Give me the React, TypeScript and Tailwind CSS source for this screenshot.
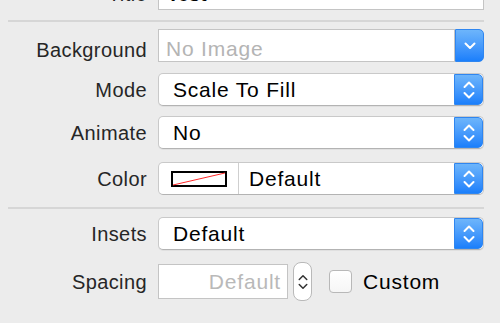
import React from "react";

const font = { fontFamily: '"Liberation Sans", Arial, sans-serif' };

function UpDown({ color = "white", w = 12, h = 20, sw = 2 }: { color?: string; w?: number; h?: number; sw?: number }) {
  return (
    <svg width={w} height={h} viewBox="0 0 12 20" fill="none">
      <path d="M1.5 7 L6 2.5 L10.5 7" stroke={color} strokeWidth={sw} strokeLinecap="round" strokeLinejoin="round" />
      <path d="M1.5 13 L6 17.5 L10.5 13" stroke={color} strokeWidth={sw} strokeLinecap="round" strokeLinejoin="round" />
    </svg>
  );
}

function Down() {
  return (
    <svg width="12" height="8" viewBox="0 0 12 8" fill="none">
      <path d="M1.5 1.5 L6 6 L10.5 1.5" stroke="white" strokeWidth="2" strokeLinecap="round" strokeLinejoin="round" />
    </svg>
  );
}

function BlueBtn({ single }: { single?: boolean }) {
  return (
    <div className="w-[29px] self-stretch flex items-center justify-center rounded-r-[5px] bg-gradient-to-b from-[#6db5fb] to-[#1a7ffb] border border-[#2f86f0]">
      {single ? <Down /> : <UpDown />}
    </div>
  );
}

function Label({ children, low }: { children: React.ReactNode; low?: boolean }) {
  return (
    <div className={"w-[147px] text-right text-[20px] tracking-[0.4px] text-[#262626] leading-none " + (low ? "pt-[8px]" : "pt-[1px]")}>
      {children}
    </div>
  );
}

function Popup({ text }: { text: string }) {
  return (
    <div className="ml-[11px] w-[326px] h-[33px] flex rounded-[5px] bg-white border border-[#c9c9c9] border-b-[#b3b3b3] shadow-[0_1px_0_rgba(0,0,0,0.05)] overflow-hidden">
      <div className="flex-1 flex items-center pl-[14px] text-[21px] tracking-[0.8px] text-black">
        {text}
      </div>
      <BlueBtn />
    </div>
  );
}

export default function App() {
  return (
    <div className="w-[500px] h-[323px] bg-[#ececec] overflow-hidden flex flex-col" style={font}>
      {/* Title row (cut off) */}
      <div className="flex items-center mt-[-23px] h-[33px]">
        <Label>Title</Label>
        <div className="ml-[11px] w-[326px] h-[33px] bg-white border border-[#c4c4c4] flex items-center pl-[8px] text-[20px] font-bold text-black">
          Test
        </div>
      </div>
      <div className="mt-[10px] ml-[8px] w-[476px] h-[2px] bg-[#d6d6d6]" />
      {/* Background */}
      <div className="flex items-center mt-[7px] h-[33px]">
        <Label low>Background</Label>
        <div className="ml-[11px] w-[326px] h-[33px] flex">
          <div className="flex-1 flex items-center pl-[7px] pt-[7px] bg-white border border-[#c4c4c4] text-[21px] tracking-[0.8px] text-[#b4b4b4]">
            No Image
          </div>
          <BlueBtn single />
        </div>
      </div>
      {/* Mode */}
      <div className="flex items-center mt-[11px] h-[33px]">
        <Label>Mode</Label>
        <Popup text="Scale To Fill" />
      </div>
      {/* Animate */}
      <div className="flex items-center mt-[10px] h-[33px]">
        <Label>Animate</Label>
        <Popup text="No" />
      </div>
      {/* Color */}
      <div className="flex items-center mt-[13px] h-[33px]">
        <Label>Color</Label>
        <div className="ml-[11px] w-[326px] h-[33px] flex rounded-[5px] bg-white border border-[#c9c9c9] border-b-[#b3b3b3] overflow-hidden">
          <div className="w-[80px] flex items-center justify-center border-r border-[#cfcfcf]">
            <svg width="56" height="16" viewBox="0 0 56 16" className="ml-[1px]">
              <rect x="1" y="1" width="54" height="14" fill="white" stroke="black" strokeWidth="2" />
              <line x1="2" y1="14" x2="54" y2="2" stroke="#ff2a2a" strokeWidth="1" />
            </svg>
          </div>
          <div className="flex-1 flex items-center pl-[10px] text-[21px] tracking-[0.8px] text-black">Default</div>
          <BlueBtn />
        </div>
      </div>
      <div className="mt-[12px] ml-[8px] w-[476px] h-[2px] bg-[#d6d6d6]" />
      {/* Insets */}
      <div className="flex items-center mt-[8px] h-[33px]">
        <Label>Insets</Label>
        <Popup text="Default" />
      </div>
      {/* Spacing */}
      <div className="flex items-center mt-[12px] h-[39px]">
        <Label>Spacing</Label>
        <div className="ml-[11px] w-[130px] h-[35px] bg-white border border-[#c4c4c4] flex items-center justify-end pr-[6px] text-[21px] tracking-[0.8px] text-[#b9b9b9]">
          Default
        </div>
        <div className="ml-[5px] w-[19px] h-[39px] rounded-[8px] border border-[#b9b9b9] bg-white flex items-center justify-center">
          <UpDown color="#333" w={10} h={22} sw={1.8} />
        </div>
        <div className="ml-[17px] w-[23px] h-[23px] rounded-[4px] border border-[#b8b8b8] bg-gradient-to-b from-white to-[#f6f6f6]" />
        <div className="ml-[11px] text-[21px] tracking-[0.8px] text-black">Custom</div>
      </div>
    </div>
  );
}
